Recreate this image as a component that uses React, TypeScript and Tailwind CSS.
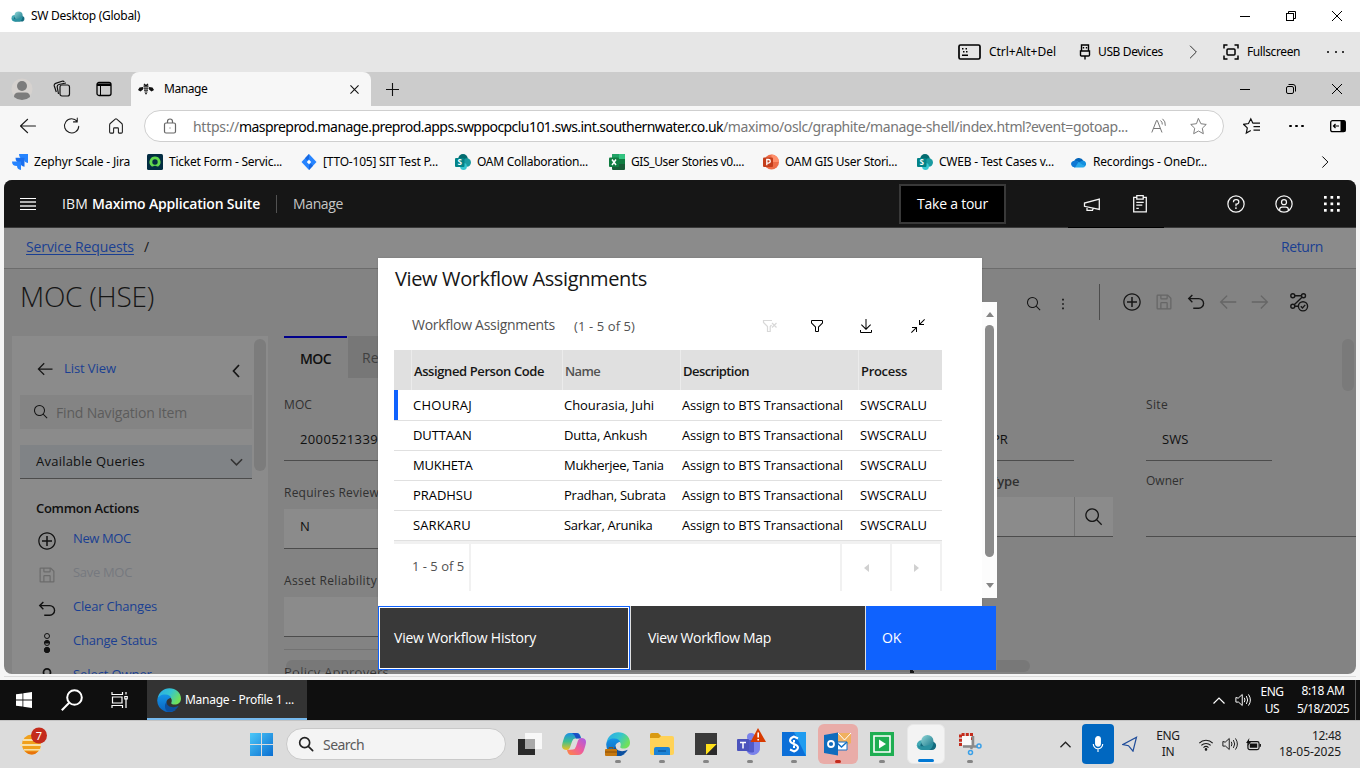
import React from "react";

type IconProps = { d: string; className?: string };

/* Filled icon on a 32-unit grid */
const Glyph = ({ d, className = "" }: IconProps) => (
  <svg viewBox="0 0 32 32" fill="currentColor" className={`shrink-0 ${className}`}>
    <path d={d} />
  </svg>
);

/* Outline icon on a 24-unit grid */
const Line = ({ d, className = "" }: IconProps) => (
  <svg
    viewBox="0 0 24 24"
    fill="none"
    stroke="currentColor"
    strokeLinecap="round"
    strokeLinejoin="round"
    className={`shrink-0 ${className}`}
  >
    <path d={d} />
  </svg>
);

const P = {
  search:
    "M29,27.5859l-7.5521-7.5521a11.0177,11.0177,0,1,0-1.4141,1.4141L27.5859,29ZM4,13a9,9,0,1,1,9,9A9.01,9.01,0,0,1,4,13Z",
  save: "M27.71,9.29l-5-5A1,1,0,0,0,22,4H6A2,2,0,0,0,4,6V26a2,2,0,0,0,2,2H26a2,2,0,0,0,2-2V10A1,1,0,0,0,27.71,9.29ZM12,6h8v4H12Zm8,20H12V18h8Zm2,0V18a2,2,0,0,0-2-2H12a2,2,0,0,0-2,2v8H6V6h4v4a2,2,0,0,0,2,2h8a2,2,0,0,0,2-2V6.41l4,4V26Z",
  undo: "M20,10H7.8149l3.5874-3.5859L10,5,4,11,10,17l1.4023-1.4146L7.8179,12H20a6,6,0,0,1,0,12H12v2h8a8,8,0,0,0,0-16Z",
  filter:
    "M18,28H14a2,2,0,0,1-2-2V18.41L4.59,11A2,2,0,0,1,4,9.59V6A2,2,0,0,1,6,4H26a2,2,0,0,1,2,2V9.59A2,2,0,0,1,27.41,11L20,18.41V26A2,2,0,0,1,18,28ZM6,6V9.59l8,8V26h4V17.59l8-8V6Z",
  download:
    "M26 24v4H6v-4H4v4a2 2 0 0 0 2 2h20a2 2 0 0 0 2-2v-4zM26 14l-1.41-1.41L17 20.17V2h-2v18.17l-7.59-7.58L6 14l10 10 10-10z",
  left: "M14 26l1.41-1.41L7.83 17H28v-2H7.83l7.58-7.59L14 6 4 16l10 10z",
  right: "M18 6l-1.43 1.39L24.15 15H4v2h20.15l-7.58 7.57L18 26l10-10z",
  minimize:
    "M4 18v2h6.586L2 28.582 3.414 30 12 21.414V28h2V18H4z M30 3.416 28.592 2 20 10.586V4h-2v10h10v-2h-6.586L30 3.416z",
  plus: "M16,4c6.6,0,12,5.4,12,12s-5.4,12-12,12S4,22.6,4,16S9.4,4,16,4 M16,2C8.3,2,2,8.3,2,16s6.3,14,14,14s14-6.3,14-14S23.7,2,16,2z M24,14.8H17.2V8h-2.4v6.8H8v2.4h6.8V24h2.4v-6.8H24z",
  help: "M16,2A14,14,0,1,0,30,16,14,14,0,0,0,16,2Zm0,26A12,12,0,1,1,28,16,12,12,0,0,1,16,28Z M17.4 22.5a1.5 1.5 0 1 1-3 0a1.5 1.5 0 1 1 3 0z M17,8H15.5A4.49,4.49,0,0,0,11,12.5V13h2v-.5A2.5,2.5,0,0,1,15.5,10H17a2.5,2.5,0,0,1,0,5H15v4.5h2V17a4.5,4.5,0,0,0,0-9Z",
  head: "M16,8a5,5,0,1,0,5,5A5,5,0,0,0,16,8Zm0,8a3,3,0,1,1,3-3A3.0034,3.0034,0,0,1,16,16Z",
  user: "M16,8a5,5,0,1,0,5,5A5,5,0,0,0,16,8Zm0,8a3,3,0,1,1,3-3A3.0034,3.0034,0,0,1,16,16Z M16,2A14,14,0,1,0,30,16,14.0158,14.0158,0,0,0,16,2ZM10,26.3765V25a3.0033,3.0033,0,0,1,3-3h6a3.0033,3.0033,0,0,1,3,3v1.3765a11.8989,11.8989,0,0,1-12,0Zm13.9925-1.4507A5.0016,5.0016,0,0,0,19,20H13a5.0016,5.0016,0,0,0-4.9925,4.9258,12,12,0,1,1,15.985,0Z",
};

const Cloud = ({ className = "" }: { className?: string }) => (
  <svg viewBox="0 0 24 18" className={`shrink-0 ${className}`}>
    <defs>
      <linearGradient id="cl1" x1="0" y1="0" x2="1" y2="1">
        <stop offset="0" stopColor="#8fd6d6" />
        <stop offset="1" stopColor="#17768a" />
      </linearGradient>
    </defs>
    <circle cx="6.500" cy="12" r="5.600" fill="#43a9b4" />
    <rect x="5" y="8" width="18" height="9.600" rx="4.800" fill="#146b7e" />
    <circle cx="13" cy="7.500" r="7" fill="url(#cl1)" />
    <path d="M2 12a6 6 0 0 0 5 5.600h8q4-2 5-8-9 6-18 2.400" fill="#2a91a0" />
  </svg>
);

const Edge = ({ className = "" }: { className?: string }) => (
  <svg viewBox="0 0 24 24" className={`shrink-0 ${className}`}>
    <defs>
      <linearGradient id="ed1" x1="0" y1="0" x2="1" y2="0.5">
        <stop offset="0" stopColor="#2aa8e8" />
        <stop offset="0.55" stopColor="#35c5cf" />
        <stop offset="1" stopColor="#70e05a" />
      </linearGradient>
      <linearGradient id="ed2" x1="0" y1="0" x2="0" y2="1">
        <stop offset="0" stopColor="#1593e6" />
        <stop offset="1" stopColor="#0a63bd" />
      </linearGradient>
    </defs>
    <path d="M.5 11C1.500 4.500 6.500.3 12.300.3 19 .3 24 5 24 10.500c0 4-3 6-6.300 6-2.500 0-3.900-.9-3.400-1.800 1-1.800.7-5.400-3-6.300C7 7.500 1.500 8.500.5 11" fill="url(#ed1)" />
    <path d="M.2 12.500C.5 8 5 6.200 8.500 6.500c3 .2 5 1.500 5.700 3.400-4 .1-5.900 4-4.200 7.600 1.800 4 6.500 5.600 9.500 4.100A12 12 0 0 1 .2 12.500" fill="url(#ed2)" />
    <path d="M9.500 14c.3 5 6.500 6.500 12.300 3.800-2.300 4.500-6.800 6.500-11 5.900C7 21.500 7.500 16 9.500 14" fill="#0c4f9e" />
  </svg>
);

const SharePoint = () => (
  <svg viewBox="0 0 16 16" className="size-4 shrink-0">
    <circle cx="8" cy="4.800" r="4.800" fill="#036c70" />
    <circle cx="11.800" cy="8.500" r="4.200" fill="#1a9ba1" />
    <circle cx="8.500" cy="12.500" r="3.400" fill="#37c6d0" />
    <rect x="0" y="4" width="9.500" height="9" rx="1" fill="#038387" />
    <text x="2.600" y="11.300" fontSize="8" fontWeight="700" fill="#fff" fontFamily="Open Sans, sans-serif">S</text>
  </svg>
);

const Speaker = ({ className = "" }: { className?: string }) => (
  <Line d="M2.500 9.200v5.600H6l5 4.500V4.700L6 9.200zM14 9.500q1.500 2.500 0 5M16.800 7.200q3.200 4.800 0 9.600M19.600 5q4.800 7 0 14" className={className} />
);

const bookmarks: { label: string; cls: string; icon: React.ReactNode }[] = [
  {
    label: "Zephyr Scale - Jira",
    cls: "w-[135px] tracking-[-0.18px] gap-[6px]",
    icon: (
      <svg viewBox="0 0 16 16" className="size-4 shrink-0">
        <path d="M7 0h9v9q-4-.5-4-4-5 0-5-5" fill="#2684ff" />
        <path d="M3.500 3.800h9v9q-4-.5-4-4-5 0-5-5" fill="#1b6fee" />
        <path d="M0 7.500h9v8.500q-4-.5-4-4-5 0-5-4.500" fill="#2684ff" />
      </svg>
    ),
  },
  {
    label: "Ticket Form - Servic...",
    cls: "w-[154px] tracking-[-0.25px] gap-[6px]",
    icon: (
      <svg viewBox="0 0 16 16" className="size-4 shrink-0">
        <rect width="16" height="16" rx="1.500" fill="#032d42" />
        <path d="M8 2.500a5.500 5.500 0 0 0-3.800 9.500q1 .9 2 .2 1.800-1 3.600 0 1 .7 2-.2A5.500 5.500 0 0 0 8 2.500m0 8.200A2.700 2.700 0 1 1 8 5.300a2.700 2.700 0 0 1 0 5.400" fill="#62d84e" />
      </svg>
    ),
  },
  {
    label: "[TTO-105] SIT Test P...",
    cls: "w-[154px] tracking-[-0.21px] gap-[6px]",
    icon: (
      <svg viewBox="0 0 16 16" className="size-4 shrink-0">
        <path d="M8 0l7.500 8L8 16 .5 8z" fill="#2684ff" />
        <path d="M8 0L4 4.300l2 2L8 5zM8 16l4-4.300-2-2L8 11z" fill="#1767e0" />
        <path d="M8 5.700L10.200 8 8 10.300 5.800 8z" fill="#fff" />
      </svg>
    ),
  },
  { label: "OAM Collaboration...", cls: "w-[154px] tracking-[-0.27px] gap-[6px]", icon: <SharePoint /> },
  {
    label: "GIS_User Stories v0....",
    cls: "w-[154px] tracking-[-0.38px] gap-[6px]",
    icon: (
      <svg viewBox="0 0 16 16" className="size-4 shrink-0">
        <rect x="3" width="13" height="16" rx="1" fill="#185c37" />
        <path d="M3 1q0-1 1-1h6v8H3z" fill="#21a366" />
        <path d="M10 0h5q1 0 1 1v4h-6z" fill="#33c481" />
        <path d="M10 5h6v5h-6z" fill="#107c41" />
        <rect y="3.500" width="10" height="9.500" rx="1" fill="#107c41" />
        <path d="M3 5.500l4 5.500M7 5.500L3 11" stroke="#fff" strokeWidth="1.500" />
      </svg>
    ),
  },
  {
    label: "OAM GIS User Stori...",
    cls: "w-[154px] tracking-[-0.31px] gap-[6px]",
    icon: (
      <svg viewBox="0 0 16 16" className="size-4 shrink-0">
        <circle cx="8.500" cy="8" r="7.500" fill="#ed6c47" />
        <path d="M8.500.5A7.500 7.500 0 0 1 16 8H8.500z" fill="#ff8f6b" />
        <rect y="3.500" width="10" height="9.500" rx="1" fill="#c43e1c" />
        <path d="M3.800 11.300V5.500h1.700a1.700 1.700 0 0 1 0 3.600H3.800" stroke="#fff" strokeWidth="1.300" fill="none" />
      </svg>
    ),
  },
  { label: "CWEB - Test Cases v...", cls: "w-[154px] tracking-[-0.23px] gap-[6px]", icon: <SharePoint /> },
  {
    label: "Recordings - OneDr...",
    cls: "w-[140px] tracking-[-0.19px] gap-[6px]",
    icon: (
      <svg viewBox="0 0 16 16" className="size-4 shrink-0">
        <path d="M3 8a5 5 0 0 1 9.300-1.500L8 10z" fill="#0364b8" />
        <path d="M12 6.500a3.500 3.500 0 0 1 2 6L6 9z" fill="#1490df" />
        <path d="M3.500 13.500A3.500 3.500 0 0 1 4 6.800q2 0 3.500 1.200l6.500 4.500q-.7 1-2 1z" fill="#28a8ea" />
        <path d="M0 10a3.500 3.500 0 0 1 4-3.200q2 0 3.500 1.200L4 13.500Q.5 13 0 10" fill="#0f78d4" />
      </svg>
    ),
  },
];

const assignments = [
  ["CHOURAJ", "Chourasia, Juhi", "tracking-[-0.04px]", "tracking-[0.27px]"],
  ["DUTTAAN", "Dutta, Ankush", "tracking-[-0.2px]", "tracking-[-0.1px]"],
  ["MUKHETA", "Mukherjee, Tania", "tracking-[-0.3px]", "tracking-[-0.25px]"],
  ["PRADHSU", "Pradhan, Subrata", "tracking-[-0.25px]", "tracking-[-0.05px]"],
  ["SARKARU", "Sarkar, Arunika", "tracking-[-0.27px]", "tracking-[0.1px]"],
];

const WindowButtons = ({ rounded = false }: { rounded?: boolean }) => (
  <div className="flex items-center text-black">
    <div className="flex w-[46px] justify-center"><div className="h-px w-[10px] bg-black" /></div>
    <div className="flex w-[46px] justify-center">
      <svg viewBox="0 0 10 10" className="size-[10px]" fill="none" stroke="currentColor">
        <rect x=".5" y="2.500" width="7" height="7" rx={rounded ? 1.5 : 0} />
        <path d={rounded ? "M2.500.5h4.500a2.500 2.500 0 0 1 2.500 2.500v4.500" : "M2.500 2.500v-2h7v7h-2"} />
      </svg>
    </div>
    <div className="flex w-[46px] justify-center">
      <svg viewBox="0 0 10 10" className="size-[10px]" stroke="currentColor"><path d="M0 0l10 10M10 0L0 10" /></svg>
    </div>
  </div>
);

const BrowserChrome = () => (
  <div className="shrink-0 whitespace-nowrap text-[12px] text-black">
    <div className="flex h-8 items-center justify-between bg-white pl-[11px]">
      <div className="flex items-center gap-[6px]">
        <Cloud className="h-[11px] w-[14px]" />
        <span className="tracking-[-0.27px]">SW Desktop (Global)</span>
      </div>
      <WindowButtons />
    </div>

    <div className="flex h-10 items-center bg-[#e6e6e6] pl-[958px]">
      <svg viewBox="0 0 23 16" className="h-4 w-[23px] shrink-0">
        <rect x="1" y="1" width="21" height="14" rx="1.500" fill="none" stroke="#000" strokeWidth="1.700" />
        <path d="M4 4h1.500v1.500H4zM7.500 4H9v1.500H7.500zM5 7h1.500v1.500H5zM8 7h1.500v1.500H8zM4 10.500h6V12H4z" />
      </svg>
      <span className="ml-2 w-[67px] tracking-[-0.04px]">Ctrl+Alt+Del</span>
      <svg viewBox="0 0 12 16" className="ml-[23px] h-4 w-3 shrink-0" fill="none" stroke="#000" strokeWidth="1.400">
        <path d="M2.500 7V1h7v6M1.500 7h9v4q0 1-1 1h-7q-1 0-1-1zM6 12v3.500M4.500 3v1.500M7.500 3v1.500" />
      </svg>
      <span className="ml-[7px] w-[65px] tracking-[-0.37px]">USB Devices</span>
      <Line d="M8 3l9 9-9 9" className="ml-[22px] size-[16px] stroke-[1.500] text-[#333]" />
      <svg viewBox="0 0 16 16" className="ml-[22px] size-4 shrink-0" fill="none" stroke="#000" strokeWidth="1.500">
        <path d="M1 4.500V1h3.500M11.500 1H15v3.500M15 11.500V15h-3.500M4.500 15H1v-3.500" />
        <rect x="4" y="5" width="8" height="6" rx="1" />
      </svg>
      <span className="ml-2 w-[53px] tracking-[-0.4px]">Fullscreen</span>
      <div className="ml-[27px] flex gap-[5.500px]">
        <i className="size-[2px] rounded-full bg-black" /><i className="size-[2px] rounded-full bg-black" /><i className="size-[2px] rounded-full bg-black" />
      </div>
    </div>

    <div className="flex h-[34px] items-center bg-[#cccccc]">
      <div className="flex h-full w-[131px] items-center rounded-br-lg pl-[11px]">
        <svg viewBox="0 0 22 22" className="size-[22px] shrink-0">
          <circle cx="11" cy="11" r="10.500" fill="#d6d2cf" />
          <circle cx="11" cy="8" r="5" fill="#7c7c7c" />
          <path d="M3 19q0-4.500 4.500-4.500h7q4.500 0 4.500 4.500-3.500 3-8 3t-8-3" fill="#7c7c7c" />
        </svg>
        <svg viewBox="0 0 18 18" className="ml-[20px] size-[18px] shrink-0" fill="none" stroke="#111" strokeWidth="1.200">
          <rect x="7" y="5" width="9.500" height="11" rx="2" />
          <path d="M5.500 14l-1.300-7q-.2-2 1.700-2.500L13 3M3.300 12L1.300 6q-.5-2 1.300-2.600L9 1.200q1.500-.5 2.300.6" />
        </svg>
        <svg viewBox="0 0 16 16" className="ml-[25px] size-4 shrink-0">
          <rect x="1" y="1.500" width="14" height="13" rx="2" fill="none" stroke="#000" strokeWidth="1.300" />
          <path d="M1 2.500h14V5H1z" /><path d="M4.500 5v9" stroke="#000" />
        </svg>
      </div>
      <div className="flex h-full w-[240px] items-center rounded-t-lg bg-[#f7f7f7] pl-[7px]">
        <svg viewBox="0 0 16 12" className="h-3 w-4 shrink-0">
          <path d="M6 .8l1.200 1.400h1.600L10 .8M5.500 3.200h5M5.500 5.200h5M6 7.200h4M6.500 9h3M7.200 10.700h1.600" stroke="#111" strokeWidth="1.200" fill="none" />
          <path d="M5 4L1.500 4.500 0 7l2.500 1.500L5 6.500zM11 4l3.500.5L16 7l-2.500 1.500L11 6.500z" fill="#111" />
        </svg>
        <span className="ml-[10px] w-[43px] tracking-[-0.45px]">Manage</span>
        <svg viewBox="0 0 10 10" className="ml-[143px] size-[9px]" stroke="#111" strokeWidth="1.200"><path d="M.5.5l9 9M9.500.5l-9 9" /></svg>
      </div>
      <svg viewBox="0 0 13 13" className="ml-[15px] size-[13px]" stroke="#111" strokeWidth="1.100"><path d="M6.500 0v13M0 6.500h13" /></svg>
      <div className="grow" />
      <WindowButtons rounded />
    </div>

    <div className="flex h-10 items-center bg-[#f7f7f7] text-[#1b1b1b]">
      <Line d="M22 12H2M11.500 3L2 12l9.500 9" className="ml-[19px] size-[18px] stroke-[1.400]" />
      <Line d="M21 12.500A9.500 9.500 0 1 1 19 6V1.500M19 6.500h-5" className="ml-[26px] size-[18px] stroke-[1.400]" />
      <Line d="M3.500 10.500Q3.500 9 5 8l6-5.200q1-.8 2 0L19 8q1.500 1 1.500 2.500V20q0 1.500-1.500 1.500h-3q-.8 0-.8-.8V15.500q0-1-1-1h-4.400q-1 0-1 1v5.200q0 .8-.8.8H5q-1.500 0-1.500-1.500z" className="ml-[26px] size-[18px] stroke-[1.400]" />
      <div className="ml-[19px] flex h-8 w-[1080px] items-center rounded-full border border-[#cfcfcf] bg-white text-[14px]">
        <svg viewBox="0 0 14 16" className="ml-[18px] h-4 w-[14px] shrink-0" fill="none" stroke="#666" strokeWidth="1.200">
          <rect x="1.500" y="5" width="11" height="10" rx="1.500" /><path d="M4.500 5V3.500a2.500 2.500 0 0 1 5 0V5M6.500 10h1" />
        </svg>
        <div className="ml-[16px] flex text-[#767676]">
          <span className="w-[46px] tracking-[-0.28px]">https://</span>
          <span className="w-[484px] tracking-[-0.55px] text-black">maspreprod.manage.preprod.apps.swppocpclu101.sws.int.southernwater.co.uk</span>
          <span className="w-[405px] tracking-[-0.39px]">/maximo/oslc/graphite/manage-shell/index.html?event=gotoap...</span>
        </div>
        <svg viewBox="0 0 16 16" className="ml-[23px] size-4 shrink-0" fill="none" stroke="#777">
          <path d="M.8 14.500L5.500 2.500h.8l4.700 12M2.500 10.500h6.800M9.500 2.500q2 1.500 1.800 4M11.500.8q3.200 2.500 2.800 7" />
        </svg>
        <Line d="M12 2.200l3 6.300 6.800.9-5 4.800 1.300 6.900L12 17.700l-6.100 3.400 1.300-6.900-5-4.800 6.800-.9z" className="ml-[22px] size-[19px] stroke-[1.200] text-[#777]" />
      </div>
      <svg viewBox="0 0 18 18" className="ml-[19px] size-[18px] shrink-0" fill="none" stroke="#111" strokeWidth="1.200">
        <path d="M10 6.500L7.800 1.800 5.500 6.500l-5 .8 3.800 3.600-1 5.200 4.500-2.500M10 6.200h7M10.500 9.700H17M10.500 13.200H17" />
      </svg>
      <div className="ml-[28px] flex gap-[3.500px]">
        <i className="size-[2.500px] rounded-full bg-black" /><i className="size-[2.500px] rounded-full bg-black" /><i className="size-[2.500px] rounded-full bg-black" />
      </div>
      <svg viewBox="0 0 16 14" className="ml-[26px] h-[14px] w-4 shrink-0">
        <rect x=".7" y="1.700" width="14.600" height="11" rx="1.800" fill="none" stroke="#000" strokeWidth="1.300" />
        <path d="M10.500 1.500H14q1.500 0 1.500 1.500v8.500q0 1.500-1.500 1.500h-3.500z" />
        <path d="M9 7H3.500M5.500 5l-2 2 2 2" stroke="#000" strokeWidth="1.200" fill="none" />
      </svg>
    </div>

    <div className="flex h-[34px] items-center bg-[#f7f7f7] pb-[2px] pl-[12px]">
      {bookmarks.map((b) => (
        <div key={b.label} className={`flex shrink-0 items-center ${b.cls}`}>{b.icon}<span>{b.label}</span></div>
      ))}
      <Line d="M8 3l9 9-9 9" className="ml-[107px] size-[14px] stroke-[1.700]" />
    </div>
  </div>
);

const SuiteHeader = () => (
  <div className="flex h-12 shrink-0 items-center border-b border-[#393939] bg-[#161616] pl-4 text-[14px] text-[#f4f4f4]">
    <svg viewBox="0 0 16 12" className="h-3 w-4 shrink-0">
      <path d="M0 0h16v1H0zM0 11h16v1H0z" fill="#fff" />
      <path d="M0 3h16v2H0zM0 7h16v2H0z" fill="#b0b0b0" />
    </svg>
    <span className="ml-[26px] w-[30px] tracking-[0.15px]">IBM</span>
    <span className="w-[168px] font-semibold tracking-[-0.18px] text-white">Maximo Application Suite</span>
    <i className="ml-4 h-[18px] w-px bg-[#525252]" />
    <span className="ml-4 w-[50px] tracking-[-0.37px] text-[#c6c6c6]">Manage</span>
    <div className="ml-[556px] flex h-10 w-[107px] items-center justify-center border-2 border-[#393939] bg-black tracking-[-0.23px] text-white">Take a tour</div>
    <div className="ml-[62px] flex h-12 w-12 items-center justify-center border-b border-black pt-[3px]">
      <svg viewBox="0 0 18 16" className="h-4 w-[18px]" fill="none" stroke="currentColor" strokeWidth="1.300">
        <path d="M16.300 2v10.500L1.500 9.300V6zM4 9.800v3.500h5.500l.8-2.200" />
      </svg>
    </div>
    <div className="flex h-12 w-12 items-center justify-center border-b border-black pt-[2px]">
      <svg viewBox="0 0 16 18" className="h-[18px] w-4" fill="none" stroke="currentColor" strokeWidth="1.300">
        <path d="M4.500 2.300H1.700v14.500h12.600V2.300h-2.800M4.800.7h6.400v3.500H4.800zM4.300 7.300h7.400M4.300 10.200h6M4.300 13.300h2.500" />
      </svg>
    </div>
    <div className="flex w-12" />
    <div className="flex w-12 justify-center"><Glyph d={P.help} className="size-5" /></div>
    <div className="flex w-12 justify-center"><Glyph d={P.user} className="size-5" /></div>
    <div className="flex w-12 justify-center">
      <svg viewBox="0 0 16 16" className="size-4" fill="#fff">
        {[0, 6.5, 13].map((y) => [0, 6.5, 13].map((x) => <rect key={`${x}-${y}`} x={x} y={y} width="2.700" height="2.700" />))}
      </svg>
    </div>
  </div>
);

const NavAction = ({ icon, label, cls }: { icon: React.ReactNode; label: string; cls: string }) => (
  <div className="flex h-[34px] shrink-0 items-center">
    <div className="flex w-[22px] justify-center pt-1">{icon}</div>
    <span className={`ml-[15px] ${cls}`}>{label}</span>
  </div>
);

const Sidebar = () => (
  <div className="flex w-[256px] shrink-0 bg-[#8b8b8b]">
    <div className="flex w-[240px] flex-col pl-2">
      <div className="flex h-[59px] shrink-0 items-center pt-[6px]">
        <Glyph d={P.left} className="ml-[15px] size-[20px] text-[#161616]" />
        <span className="ml-[9px] w-[60px] text-[13px] tracking-[-0.08px] text-[#1a3f92]">List View</span>
        <svg viewBox="0 0 8 14" className="ml-[108px] mt-1 h-[14px] w-2" fill="none" stroke="#161616" strokeWidth="1.700"><path d="M7 1L1.500 7 7 13" /></svg>
      </div>
      <div className="flex h-[34px] shrink-0 items-center bg-[#848484] pl-[13px]">
        <Glyph d={P.search} className="size-4 text-[#161616]" />
        <span className="ml-[7px] text-[14px] tracking-[-0.18px] text-[#5c5c5c]">Find Navigation Item</span>
      </div>
      <div className="mt-4 flex h-[34px] shrink-0 items-center justify-between border-b border-[#4c4c4c] bg-[#808386] pl-4 pr-[9px] text-[13px] tracking-[0.23px] text-[#101010]">
        Available Queries
        <svg viewBox="0 0 14 8" className="h-2 w-[13px]" fill="none" stroke="#333" strokeWidth="1.700"><path d="M1 1l6 6 6-6" /></svg>
      </div>
      <div className="mt-[20px] shrink-0 pl-4 text-[13px] leading-[18px] font-semibold tracking-[-0.28px] text-[#101010]">Common Actions</div>
      <div className="mt-[5px] flex flex-col pl-4 text-[13px] text-[#1a3f92]">
        <NavAction label="New MOC" cls="tracking-[-0.4px]" icon={<Glyph d={P.plus} className="size-5 text-[#111]" />} />
        <NavAction label="Save MOC" cls="tracking-[-0.31px] text-[#76797f]" icon={<Glyph d={P.save} className="size-5 text-[#6c6c6c]" />} />
        <NavAction label="Clear Changes" cls="tracking-[-0.2px]" icon={<Glyph d={P.undo} className="size-[22px] text-[#111]" />} />
        <NavAction
          label="Change Status"
          cls="tracking-[-0.22px]"
          icon={
            <svg viewBox="0 0 8 20" className="h-5 w-2" fill="none" stroke="#111">
              <circle cx="4" cy="3" r="2.500" /><circle cx="4" cy="10" r="2.500" /><path d="M1.500 10a2.500 2.500 0 0 1 5 0z" fill="#111" /><circle cx="4" cy="17" r="2.700" fill="#111" />
            </svg>
          }
        />
        <NavAction label="Select Owner" cls="tracking-[-0.1px]" icon={<Glyph d={P.head} className="-mt-1 size-7 text-[#111]" />} />
      </div>
    </div>
    <div className="ml-[2px] mt-[3px] h-[132px] w-3 rounded-full bg-[#7c7c7c]" />
  </div>
);

const BackgroundForm = () => (
  <div className="ml-4 flex grow flex-col text-[12px] text-[#303030]">
    <div className="flex h-[42px] shrink-0 text-[14px]">
      <div className="flex w-[63px] items-center justify-center border-t-2 border-[#00008b] font-semibold tracking-[-0.6px] text-[#101010]">MOC</div>
      <div className="ml-px flex w-[150px] items-center bg-[#777777] pl-[14px] text-[#404040]">Related Records</div>
    </div>
    <div className="flex h-[271px] shrink-0">
      <div className="flex w-[320px] flex-col">
        <div className="mt-[17px] h-5 shrink-0 leading-5 tracking-[0.1px]">MOC</div>
        <div className="mt-1 flex h-[42px] shrink-0 items-center border-b border-[#4c4c4c] pl-4 text-[13px] tracking-[0.37px] text-[#101010]">2000521339</div>
        <div className="mt-[22px] h-5 shrink-0 leading-5 tracking-[0.23px]">Requires Review</div>
        <div className="mt-[6px] flex h-10 shrink-0 items-center border-b border-[#4c4c4c] bg-[#8b8b8b] pb-1 pl-4 text-[13px] text-[#101010]">N</div>
        <div className="mt-[22px] h-5 shrink-0 leading-5 tracking-[0.37px]">Asset Reliability</div>
        <div className="mt-[6px] h-10 shrink-0 border-b border-[#4c4c4c] bg-[#8b8b8b]" />
        <div className="mt-3 h-px w-full shrink-0 bg-[#727272]" />
      </div>
      <div className="ml-[386px] flex w-[123px] flex-col">
        <div className="mt-[41px] flex h-[42px] w-[84px] items-center border-b border-[#4c4c4c] pl-[2px] text-[13px] text-[#101010]">PR</div>
        <div className="mt-[10px] h-5 text-[13px] leading-5 font-semibold tracking-[-0.1px]">Type</div>
        <div className="mt-[6px] flex h-10 border-b border-[#4c4c4c] bg-[#8b8b8b]">
          <div className="w-[85px] border-r border-[#727272]" />
          <div className="flex w-[38px] items-center justify-center"><Glyph d={P.search} className="size-5 text-[#161616]" /></div>
        </div>
      </div>
      <div className="ml-[33px] flex grow flex-col">
        <div className="mt-[17px] h-5 leading-5 tracking-[0.34px]">Site</div>
        <div className="mt-1 flex h-[42px] w-[126px] items-center border-b border-[#4c4c4c] pl-4 text-[13px] text-[#101010]">SWS</div>
        <div className="mt-[10px] h-5 leading-5">Owner</div>
        <div className="mt-[6px] h-10 border-b border-[#4c4c4c]" />
      </div>
    </div>
    <div className="mt-[13px] text-[13px] leading-5 tracking-[0.26px]">Policy Approvers</div>
  </div>
);

const AppShell = () => (
  <div className="mx-1 flex h-[494px] shrink-0 flex-col overflow-hidden rounded-lg bg-[#838383] whitespace-nowrap">
    <SuiteHeader />
    <div className="flex h-[41px] shrink-0 items-center border-b border-[#6c6c6c] bg-[#8b8b8b] pb-[3px] pl-[22px] pr-[33px] text-[14px] text-[#1a3f92]">
      <span className="tracking-[-0.12px] underline underline-offset-2">Service Requests</span>
      <span className="ml-[10px] text-[#161616]">/</span>
      <span className="ml-auto tracking-[-0.4px]">Return</span>
    </div>
    <div className="flex h-[67px] shrink-0 items-center pb-px text-[#161616]">
      <span className="mb-[12px] ml-[16px] w-[135px] text-[28px] font-light tracking-[-0.26px]">MOC (HSE)</span>
      <Glyph d={P.search} className="ml-[871px] mt-1 size-4" />
      <svg viewBox="0 0 4 14" className="ml-[19px] mt-1 h-[12px] w-1" fill="#161616"><path d="M1 1h2v2H1zM1 6h2v2H1zM1 11h2v2H1z" /></svg>
      <i className="ml-[34px] h-9 w-px bg-[#4c4c4c]" />
      <Glyph d={P.plus} className="ml-[22px] size-5" />
      <Glyph d={P.save} className="ml-[12px] size-5 text-[#666]" />
      <Glyph d={P.undo} className="ml-[11px] size-[22px]" />
      <Glyph d={P.left} className="ml-[10px] size-[22px] text-[#666]" />
      <Glyph d={P.right} className="ml-[10px] size-[22px] text-[#666]" />
      <svg viewBox="0 0 20 20" className="ml-[18px] size-5" fill="none" stroke="#161616" strokeWidth="1.400">
        <circle cx="3.800" cy="3.800" r="2" /><circle cx="14.500" cy="3.800" r="2" /><circle cx="3.800" cy="14.300" r="2" />
        <path d="M5.800 3.800h6.700M13 5.300L5.200 12.800M5.800 14.300H9" /><circle cx="14" cy="14.300" r="4.600" /><path d="M11.800 14.300l1.700 1.600 2.700-3" />
      </svg>
    </div>
    <div className="flex grow items-stretch overflow-hidden pl-2">
      <Sidebar />
      <BackgroundForm />
    </div>
  </div>
);

const HEAD = "flex h-full items-center border-l border-[#ebebeb] pl-[2px] pt-[3px] font-semibold";

const Dialog = () => (
  <div className="absolute left-[378px] top-[258px] flex w-[619px] flex-col whitespace-nowrap">
    <div className="flex h-[348px]">
      <div className="flex w-[604px] flex-col bg-white px-4 shadow-[0_0_2px_rgba(0,0,0,0.15)]">
        <div className="mt-[7px] h-7 pl-px text-[20px] leading-7 tracking-[-0.37px] text-[#161616]">View Workflow Assignments</div>
        <div className="mt-[21px] flex h-6 items-center pl-[18px] text-[#525252]">
          <span className="mb-[4px] w-[143px] text-[14px] tracking-[-0.28px]">Workflow Assignments</span>
          <span className="mt-px ml-[19px] w-[61px] text-[13px] tracking-[0.1px]">(1 - 5 of 5)</span>
          <svg viewBox="0 0 16 14" className="ml-[127px] h-[14px] w-4 text-[#d8d8d8]" fill="none" stroke="currentColor" strokeWidth="1.200">
            <path d="M10 1.500H1.500v2l4 4v5h2.700v-5L9.500 6M10 4l4.500 4.500M14.500 4L10 8.500" />
          </svg>
          <Glyph d={P.filter} className="ml-[31px] size-4 text-black" />
          <Glyph d={P.download} className="ml-[33px] size-4 text-black" />
          <Glyph d={P.minimize} className="ml-[36px] size-4 text-black" />
        </div>
        <div className="mt-3 flex h-10 w-[548px] shrink-0 bg-[#e0e0e0] text-[13px] text-[#161616]">
          <div className="w-[17px]" />
          <div className={`${HEAD} w-[151px] tracking-[-0.4px]`}>Assigned Person Code</div>
          <div className={`${HEAD} w-[118px] tracking-[-0.66px] text-[#525252]`}>Name</div>
          <div className={`${HEAD} w-[178px] tracking-[-0.55px]`}>Description</div>
          <div className={`${HEAD} grow tracking-[-0.31px]`}>Process</div>
        </div>
        {assignments.map(([code, name, nameTrack, codeTrack], i) => (
          <div key={code} className={`flex h-[30px] w-[548px] shrink-0 items-center text-[13px] text-black ${i === 0 ? "pt-px shadow-[inset_4px_0_0_#0f62fe]" : "border-t border-[#e0e0e0]"}`}>
            <span className={`ml-[19px] w-[151px] ${codeTrack}`}>{code}</span>
            <span className={`w-[118px] ${nameTrack}`}>{name}</span>
            <span className="w-[178px] tracking-[-0.18px]">Assign to BTS Transactional</span>
            <span>SWSCRALU</span>
          </div>
        ))}
        <div className="h-px w-[548px] shrink-0 bg-[#e0e0e0]" />
        <div className="flex h-[50px] w-[548px] shrink-0 items-center border-t-[3px] border-[#f1f1f1] text-[13px] text-[#525252]">
          <div className="flex h-full w-[77px] items-center border-r-2 border-[#f1f1f1] pb-px pl-[18px]">1 - 5 of 5</div>
          <div className="grow" />
          <div className="flex h-full w-[52px] items-center justify-center border-x-2 border-[#f1f1f1]">
            <svg viewBox="0 0 5 8" className="h-2 w-[5px]" fill="#d0d0d0"><path d="M5 0v8L0 4z" /></svg>
          </div>
          <div className="flex h-full w-[50px] items-center justify-center border-r-2 border-[#f1f1f1]">
            <svg viewBox="0 0 5 8" className="h-2 w-[5px]" fill="#d0d0d0"><path d="M0 0v8l5-4z" /></svg>
          </div>
        </div>
      </div>
      <div className="mt-11 flex h-[296px] w-[15px] flex-col items-center bg-[#fcfcfc]">
        <svg viewBox="0 0 8 5" className="mt-[10px] h-[5px] w-2" fill="#858585"><path d="M0 5h8L4 0z" /></svg>
        <div className="mt-[8px] h-[232px] w-[9px] shrink-0 rounded-full bg-[#8b8b8b]" />
        <svg viewBox="0 0 8 5" className="mt-[26px] h-[5px] w-2" fill="#858585"><path d="M0 0h8L4 5z" /></svg>
      </div>
    </div>
    <div className="flex h-16 bg-[#e0e0e0] text-[14px] text-white">
      <div className="flex w-[252px] border border-[#0f62fe] bg-white p-px">
        <div className="flex grow items-center bg-[#393939] pb-[2px] pl-[14px] tracking-[-0.21px]">View Workflow History</div>
      </div>
      <div className="ml-px flex w-[234px] items-center bg-[#393939] pb-[2px] pl-[17px] tracking-[-0.34px]">View Workflow Map</div>
      <div className="ml-px flex w-[130px] items-center bg-[#0f62fe] pb-[2px] pl-4 tracking-[-0.23px]">OK</div>
      <div className="w-px bg-[#838383]" />
    </div>
    <svg viewBox="0 0 4 3" className="ml-[532px] h-[3px] w-1" fill="#161616"><path d="M0 0h3v1h1v2H0z" /></svg>
  </div>
);

const RemoteTaskbar = () => (
  <div className="flex h-10 shrink-0 items-center bg-[#0f0f0f] whitespace-nowrap text-[12px] text-white">
    <svg viewBox="0 0 16 16" className="ml-4 size-4" fill="#fff"><path d="M0 2.300l6.500-.9v6.200H0zM7.300 1.300L16 0v7.600H7.300zM0 8.400h6.500v6.200L0 13.700zM7.300 8.400H16V16l-8.700-1.300z" /></svg>
    <svg viewBox="0 0 22 22" className="ml-[29px] size-[22px]" fill="none" stroke="#fff" strokeWidth="2"><circle cx="13.500" cy="8.500" r="7.300" /><path d="M8.200 13.700L.8 21.200" /></svg>
    <svg viewBox="0 0 18 18" className="ml-[28px] size-[18px]" fill="none" stroke="#fff" strokeWidth="1.200">
      <path d="M1 1v2.500h10.500V1M1 17v-2.500h10.500V17M1.500 6h9.500v6H1.500zM15 1v2.500M15 8.500V17M13.800 5.500h2.400v2.400h-2.400z" />
    </svg>
    <div className="ml-[18px] flex h-full w-[160px] items-center border-b-2 border-[#76b9ed] bg-[#333333] pt-px pl-[10px]">
      <Edge className="size-6" />
      <span className="ml-[4px] tracking-[-0.28px]">Manage - Profile 1 ...</span>
    </div>
    <div className="grow" />
    <svg viewBox="0 0 12 7" className="h-[7px] w-3" fill="none" stroke="#fff" strokeWidth="1.200"><path d="M.5 6.500L6 1l5.500 5.500" /></svg>
    <Speaker className="ml-[9px] size-[18px] stroke-[1.300]" />
    <div className="ml-[8px] flex w-6 flex-col items-center leading-[17px] tracking-[-0.5px]"><span>ENG</span><span>US</span></div>
    <div className="ml-[12px] flex w-[54px] flex-col items-center leading-[18px]"><span className="tracking-[-0.35px]">8:18 AM</span><span className="tracking-[-0.55px]">5/18/2025</span></div>
    <div className="ml-[5px] h-full w-[5px] border-l border-[#555]" />
  </div>
);

const Tile = ({ children, bar = "w-[6px] bg-[#858585]", cls = "w-[44px]" }: { children: React.ReactNode; bar?: string; cls?: string }) => (
  <div className={`flex h-10 shrink-0 flex-col items-center justify-end ${cls}`}>
    <div className="flex h-6 items-center justify-center">{children}</div>
    <i className={`mt-[4px] mb-px h-[3px] rounded-full ${bar}`} />
  </div>
);

const LocalTaskbar = () => (
  <div className="flex h-12 shrink-0 items-center border-t border-[#c4c4c4] bg-[#dcdcdc] pb-px whitespace-nowrap text-[12px] text-[#1b1b1b]">
    <svg viewBox="0 0 30 30" className="mb-[5px] ml-[19px] size-[30px]">
      <ellipse cx="12.500" cy="17.500" rx="9.500" ry="10" fill="#f0a01c" />
      <path d="M4 12h18v2H4zM1 17h21v2H1zM5 22h17v1.600H5z" fill="#f8e0a8" /><path d="M6 24.500h13q-2.500 3-6 3t-7-3" fill="#e8730c" />
      <circle cx="20" cy="8.500" r="8" fill="#c42b1c" />
      <text x="20" y="12.500" fontSize="11" fill="#fff" textAnchor="middle" fontFamily="Noto Sans, sans-serif">7</text>
    </svg>
    <svg viewBox="0 0 23 23" className="ml-[201px] size-[23px]">
      <defs><linearGradient id="wl" x1="0" y1="0" x2="1" y2="1"><stop offset="0" stopColor="#4cc8f8" /><stop offset="1" stopColor="#0a6ed1" /></linearGradient></defs>
      <path d="M0 0h11v11H0zM12 0h11v11H12zM0 12h11v11H0zM12 12h11v11H12z" fill="url(#wl)" />
    </svg>
    <div className="ml-[13px] flex h-8 w-[220px] items-center rounded-full border border-[#c9c9c9] bg-[#f4f4f4] pl-[11px] text-[14px] text-[#5a5a5a]">
      <Line d="M10 2.500a7.500 7.500 0 1 0 0 15 7.500 7.500 0 0 0 0-15M15.500 15.500L22 22" className="size-[16px] stroke-[2.500] text-[#222]" />
      <span className="ml-[9px] tracking-[-0.55px]">Search</span>
    </div>
    <div className="flex w-[46px] justify-center">
      <svg viewBox="0 0 24 22" className="ml-[2px] h-[22px] w-6"><path d="M7 0h17v16H7z" fill="#f8f8f8" /><path d="M0 6h17v16H0z" fill="#2a2a2a" /><path d="M7 6h10v10H7z" fill="#a9a9a9" /></svg>
    </div>
    <div className="flex w-[44px] justify-center">
      <svg viewBox="0 0 24 22" className="h-[22px] w-6">
        <defs>
          <linearGradient id="c1" x1="0" y1="0" x2="0" y2="1"><stop offset="0" stopColor="#1a8fe6" /><stop offset=".5" stopColor="#3fbf8f" /><stop offset="1" stopColor="#f0c020" /></linearGradient>
          <linearGradient id="c2" x1="1" y1="0" x2="0" y2="1"><stop offset="0" stopColor="#a55be8" /><stop offset=".5" stopColor="#ee5c9c" /><stop offset="1" stopColor="#ff8a3c" /></linearGradient>
        </defs>
        <path d="M8 0h7q3 0 4 5l-6 .5q-2 0-3 3l-2 6q-1 2.500-3 2.500-5 0-5-4 0-2 2-8 1.500-5 6-5" fill="url(#c1)" />
        <path d="M14 0q3 0 4 3l1 2.500h-5q-1-4-4-5.500z" fill="#1b4fc4" />
        <path d="M16 22H9q-3 0-4-5l6-.5q2 0 3-3l2-6q1-2.500 3-2.500 5 0 5 4 0 2-2 8-1.500 5-6 5" fill="url(#c2)" />
      </svg>
    </div>
    <Tile>
      <div className="relative"><Edge className="size-6" />
        <svg viewBox="0 0 12 9" className="absolute bottom-0 -left-px h-[9px] w-3"><path d="M4 2V.7h4V2" stroke="#8a4f08" fill="none" /><rect y="2" width="12" height="7" rx="1" fill="#c4770f" /><path d="M0 5h12" stroke="#8a4f08" /></svg>
      </div>
    </Tile>
    <Tile>
      <svg viewBox="0 0 24 22" className="h-[22px] w-6"><path d="M0 2q0-2 2-2h6l3 3h11q2 0 2 2v15q0 2-2 2H2q-2 0-2-2z" fill="#ffd257" /><path d="M0 2q0-2 2-2h6l3 3-2 2H0z" fill="#d99a12" /><path d="M4 16q0-2 2-2h12q2 0 2 2v6H4z" fill="#1c83d6" /><path d="M8 18h8" stroke="#0c5ba3" strokeWidth="1.500" /></svg>
    </Tile>
    <Tile>
      <svg viewBox="0 0 22 22" className="size-[22px]"><path d="M0 0h22v22H0z" fill="#3a3a3a" /><path d="M22 11L11 22V11z" fill="#ffe01a" /><path d="M11 22l11-11v11z" fill="#2a2a2a" /></svg>
    </Tile>
    <Tile>
      <svg viewBox="0 0 30 28" className="mb-[5px] ml-[3px] h-7 w-[30px]">
        <circle cx="14" cy="9" r="4" fill="#7b83eb" /><path d="M8 12h15v7a7 7 0 0 1-14 2z" fill="#7b83eb" /><path d="M8 12h9v12q-6 2-9-4z" fill="#5059c9" />
        <rect y="11" width="12" height="12" rx="1" fill="#4b53bc" /><path d="M3 14.500h6M6 14.500V20.500" stroke="#fff" strokeWidth="1.500" />
        <path d="M21 0l8 14H13.500z" fill="#d83b01" /><path d="M21.200 4.500v5M21.200 11v1.500" stroke="#fff" strokeWidth="1.600" />
      </svg>
    </Tile>
    <Tile>
      <svg viewBox="0 0 24 24" className="size-6"><path d="M0 0h24v24H0z" fill="#0b6fd8" /><path d="M12 0h12v24z" fill="#1f9cf0" /><path d="M16 6.500L12 4.500q-4 1.500-4 4 0 2 4 3.500t4 3.500q0 2.500-4 4l-4-2M12 8v2.500M12 13.500V16" fill="none" stroke="#fff" strokeWidth="2" /></svg>
    </Tile>
    <Tile cls="rounded-md bg-[#e9aca8] w-[40px] mx-[2px]" bar="w-[6px] bg-[#c42b1c]">
      <svg viewBox="0 0 28 24" className="h-6 w-7"><path d="M14 1h13v10l-6 3h-7z" fill="#f0b060" /><path d="M14 1l6.500 7L27 1" fill="none" stroke="#fff" /><path d="M12 10h11v8H12z" fill="#fff" stroke="#1471c8" /><path d="M12 10l5.500 5 5.500-5" fill="none" stroke="#1471c8" strokeWidth="1.500" /><path d="M0 3l14-2.500v23L0 21z" fill="#0f6cbd" /><circle cx="7" cy="12" r="3" fill="none" stroke="#fff" strokeWidth="1.800" /></svg>
    </Tile>
    <Tile>
      <svg viewBox="0 0 24 24" className="size-6"><path d="M0 0h24v24H0z" fill="#1eae52" /><path d="M4 4h16v16H4z" fill="none" stroke="#fff" strokeWidth="1.600" /><path d="M9 7.500v9l7-4.500z" fill="#fff" /></svg>
    </Tile>
    <Tile cls="rounded-md border border-[#e8e8e8] bg-[#f3f3f3] w-[38px] mx-[3px]" bar="w-4 bg-[#0078d4]"><Cloud className="mb-px h-[17px] w-[21px]" /></Tile>
    <Tile>
      <svg viewBox="0 0 24 24" className="mb-px size-6"><path d="M2.500 14V2.500h11V8" fill="none" stroke="#c42b1c" strokeWidth="3" strokeDasharray="3 1.200" /><path d="M4 4h9v9H4z" fill="#fafafa" /><path d="M15 4v9l-2 4M5 14.500h14" stroke="#8a8a8a" strokeWidth="2.500" fill="none" /><circle cx="21" cy="14" r="2" fill="none" stroke="#3aa0e8" strokeWidth="1.500" /><circle cx="12.500" cy="20.500" r="2" fill="none" stroke="#3aa0e8" strokeWidth="1.500" /></svg>
    </Tile>
    <div className="grow" />
    <svg viewBox="0 0 12 7" className="h-[7px] w-[11px]" fill="none" stroke="#222" strokeWidth="1.400"><path d="M.5 6.500L6 1l5.500 5.500" /></svg>
    <div className="ml-[11px] flex h-10 w-8 items-center justify-center rounded-[4px] bg-[#0067c0]">
      <svg viewBox="0 0 12 18" className="h-[17px] w-3" fill="none" stroke="#fff" strokeWidth="1.200"><rect x="3.500" y=".7" width="5" height="10" rx="2.500" fill="#fff" /><path d="M1 8.500a5 5 0 0 0 10 0M6 13.500V17" /></svg>
    </div>
    <svg viewBox="0 0 16 16" className="ml-2 size-4" fill="none" stroke="#1e4c9a" strokeWidth="1.200"><path d="M14.500 1.200L1 8.500l5.500 1.200 4.500 5.500z" /></svg>
    <div className="ml-[17px] flex w-[26px] flex-col items-center leading-4 tracking-[-0.3px]"><span>ENG</span><span>IN</span></div>
    <svg viewBox="0 0 16 14" className="ml-[17px] h-[13px] w-4" fill="none" stroke="#1b1b1b" strokeWidth="1.200"><path d="M.8 5.500a10 10 0 0 1 14.400 0M3 8a7 7 0 0 1 10 0M5.300 10.300a4 4 0 0 1 5.400 0" /><circle cx="8" cy="12.300" r=".8" fill="#1b1b1b" /></svg>
    <Speaker className="ml-[7px] size-[18px] stroke-[1.300]" />
    <svg viewBox="0 0 17 14" className="ml-[6px] h-[13px] w-[17px]"><rect x="2.500" y="4" width="12" height="8.500" rx="2" fill="none" stroke="#111" strokeWidth="1.300" /><path d="M4.500 6h8v4.500h-8zM15 6.500h1.500v3H15zM4 0L.5 5.500H3L2 9l4-5H3.500z" fill="#111" /></svg>
    <div className="ml-[16px] mr-[19px] flex w-[63px] flex-col items-end leading-4"><span className="tracking-[-0.34px]">12:48</span><span className="tracking-[-0.06px]">18-05-2025</span></div>
  </div>
);

export default function App() {
  return (
    <div className="relative flex h-[768px] w-[1360px] flex-col overflow-hidden bg-[#f5f5f5] font-['Noto_Sans',sans-serif]">
      <BrowserChrome />
      <div className="font-['Open_Sans',sans-serif]"><AppShell /></div>
      <div className="mx-1 mt-[2px] mb-[3px] h-px bg-[#dcdcdc]" />
      <RemoteTaskbar />
      <LocalTaskbar />
      {/* Overlay scrollbars of the form */}
      <div className="absolute left-[1342px] top-[339px] h-[52px] w-3 rounded-full bg-[#7a7a7a]" />
      <div className="absolute left-[286px] top-[660px] h-3 w-[744px] rounded-full bg-[#6a6a6a]/40" />
      <div className="font-['Open_Sans',sans-serif]"><Dialog /></div>
    </div>
  );
}
